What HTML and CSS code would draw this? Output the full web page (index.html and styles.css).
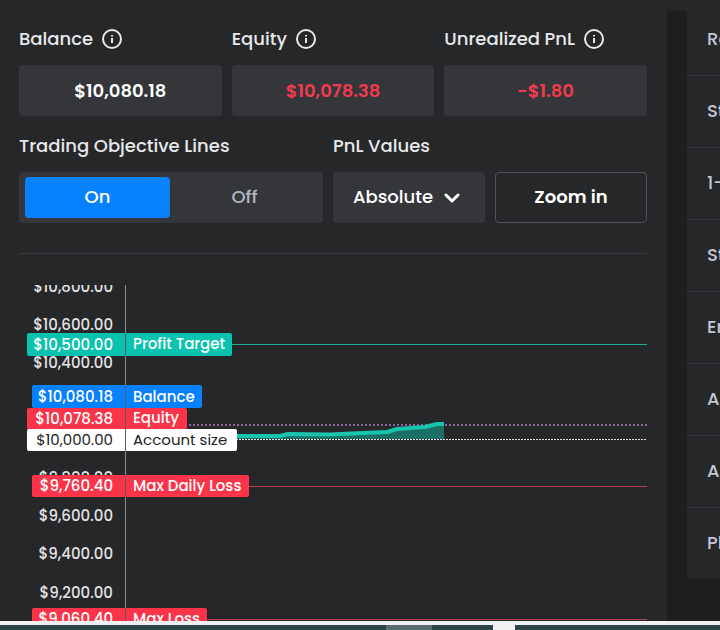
FILE: index.html
```html
<!DOCTYPE html>
<html lang="en">
<head>
<meta charset="utf-8">
<meta name="viewport" content="width=device-width, initial-scale=1">
<title>Account overview</title>
<link rel="stylesheet" href="styles.css">
</head>
<body>
<div class="top-edge"></div>
<main class="layout">
  <section class="panel">
    <div class="stats">
      <div class="stat">
        <h2 class="label">Balance
          <svg class="info" viewBox="0 0 20 20" aria-hidden="true"><circle cx="10" cy="10" r="9"/><path d="M10 9v5M10 6v1.6"/></svg>
        </h2>
        <div class="value">$10,080.18</div>
      </div>
      <div class="stat">
        <h2 class="label">Equity
          <svg class="info" viewBox="0 0 20 20" aria-hidden="true"><circle cx="10" cy="10" r="9"/><path d="M10 9v5M10 6v1.6"/></svg>
        </h2>
        <div class="value loss">$10,078.38</div>
      </div>
      <div class="stat">
        <h2 class="label">Unrealized PnL
          <svg class="info" viewBox="0 0 20 20" aria-hidden="true"><circle cx="10" cy="10" r="9"/><path d="M10 9v5M10 6v1.6"/></svg>
        </h2>
        <div class="value loss">-$1.80</div>
      </div>
    </div>

    <div class="controls">
      <fieldset class="control">
        <legend class="label">Trading Objective Lines</legend>
        <div class="toggle">
          <label class="option"><input type="radio" name="lines" checked><span>On</span></label>
          <label class="option"><input type="radio" name="lines"><span>Off</span></label>
        </div>
      </fieldset>
      <div class="control">
        <label class="label" for="pnl">PnL Values</label>
        <div class="select">
          <select id="pnl"><option>Absolute</option></select>
          <svg class="chevron" viewBox="0 0 16 10" aria-hidden="true"><path d="M2 2l6 6 6-6"/></svg>
        </div>
      </div>
      <button class="zoom" type="button">Zoom in</button>
    </div>

    <svg class="chart" role="img" aria-label="Account value chart">
      <g class="ticks">
        <text x="94" y="7">$10,800.00</text>
        <text x="94" y="45">$10,600.00</text>
        <text x="94" y="83">$10,400.00</text>
        <text x="94" y="198">$9,800.00</text>
        <text x="94" y="236">$9,600.00</text>
        <text x="94" y="274">$9,400.00</text>
        <text x="94" y="313">$9,200.00</text>
      </g>
      <g class="levels">
        <line class="green" x1="106" x2="100%" y1="59.5" y2="59.5"/>
        <line class="purple" x1="106" x2="100%" y1="140" y2="140"/>
        <line class="red" x1="106" x2="100%" y1="201.5" y2="201.5"/>
        <line class="red" x1="106" x2="100%" y1="334.5" y2="334.5"/>
      </g>
      <path class="area" d="M218 151L261 151L269 149L311 149.500L344 148L368 147L378 144L406 142L418 139L425 139V154H218Z"/>
      <path class="series" d="M210 151L261 151L269 149L311 149.500L344 148L368 147L378 144L406 142L418 139L425 139"/>
      <line class="white" x1="106" x2="100%" y1="154.500" y2="154.500"/>
      <g class="tags">
        <rect class="fill-green" x="8" y="48" width="205" height="23" rx="2"/>
        <rect class="fill-blue" x="13" y="100" width="170" height="23" rx="2"/>
        <rect class="fill-red" x="8" y="123" width="160" height="22" rx="2"/>
        <rect class="fill-white" x="8" y="144" width="210" height="22" rx="2"/>
        <rect class="fill-red" x="13" y="190" width="217" height="22" rx="2"/>
        <rect class="fill-red" x="13" y="323" width="175" height="22" rx="2"/>
      </g>
      <line class="axis" x1="106.500" x2="106.500" y1="0" y2="100%"/>
      <path class="axis-shade" d="M106.500 48V71M106.500 100V166M106.500 190V212M106.500 323V345"/>
      <g class="tag-values">
        <text x="94" y="65">$10,500.00</text>
        <text x="94" y="117">$10,080.18</text>
        <text x="94" y="139">$10,078.38</text>
        <text class="dark" x="94" y="160">$10,000.00</text>
        <text x="94" y="206">$9,760.40</text>
        <text x="94" y="339">$9,060.40</text>
      </g>
      <g class="tag-names">
        <text x="114" y="64">Profit Target</text>
        <text x="114" y="117">Balance</text>
        <text x="114" y="138">Equity</text>
        <text class="dark" x="114" y="160">Account size</text>
        <text x="114" y="206">Max Daily Loss</text>
        <text x="114" y="339">Max Loss</text>
      </g>
    </svg>
  </section>

  <aside class="details">
    <ul class="list">
      <li>Re</li>
      <li>St</li>
      <li>1-</li>
      <li>St</li>
      <li>En</li>
      <li>A</li>
      <li>A</li>
      <li>Pl</li>
    </ul>
  </aside>
</main>
<footer class="dock"><span class="task"></span><span class="window"></span></footer>
</body>
</html>
```
FILE: styles.css
```css
* {
  box-sizing: border-box;
}

body {
  margin: 0;
  min-height: 100vh;
  overflow: hidden;
  display: flex;
  flex-direction: column;
  background: #1e1e1e;
  color: #e8e8ea;
  font: 500 18px/24px Poppins, Inter, "Liberation Sans", sans-serif;
}

.top-edge {
  height: 11px;
  background: #262729;
}

.layout {
  flex: 1;
  display: grid;
  grid-template-columns: minmax(0, 1fr) 33px;
  gap: 20px;
}

.panel {
  padding: 16px 20px 0 19px;
  background: #262729;
}

.stats {
  display: grid;
  grid-template-columns: repeat(3, minmax(0, 1fr));
  gap: 10px;
}

.label {
  display: flex;
  align-items: center;
  gap: 9px;
  margin: 0 0 14px;
  padding: 0;
  height: 24px;
  font-size: 18px;
  font-weight: 500;
  white-space: nowrap;
}

.info {
  width: 20px;
  height: 20px;
  fill: none;
  stroke: #e8e8ea;
  stroke-width: 2;
}

.value {
  height: 51px;
  display: flex;
  align-items: center;
  justify-content: center;
  border-radius: 4px;
  background: #35363a;
  color: #fff;
  font-weight: 600;
}

.loss {
  color: #f23a4f;
}

.controls {
  display: grid;
  grid-template-columns: minmax(0, 2fr) minmax(0, 1fr) minmax(0, 1fr);
  align-items: end;
  gap: 10px;
  margin-top: 18px;
  padding-bottom: 30px;
  border-bottom: 1px solid #38393c;
}

.control {
  min-width: 0;
  margin: 0;
  padding: 0;
  border: 0;
}

.toggle {
  display: grid;
  grid-template-columns: 1fr 1fr;
  gap: 2px;
  height: 51px;
  padding: 5px 6px;
  border-radius: 4px;
  background: #35363a;
}

.option {
  display: grid;
  color: #b4b6bf;
}

.option input,
.option span {
  grid-area: 1 / 1;
}

.option input {
  margin: 0;
  appearance: none;
}

.option span {
  display: flex;
  align-items: center;
  justify-content: center;
  border-radius: 4px;
}

.option input:checked + span {
  background: #0781fe;
  color: #fff;
}

.select {
  display: grid;
  align-items: center;
}

.select select,
.chevron {
  grid-area: 1 / 1;
}

.select select {
  width: 100%;
  height: 51px;
  padding: 0 20px;
  border: 0;
  border-radius: 4px;
  appearance: none;
  background: #35363a;
  color: #fff;
  font: inherit;
}

.chevron {
  justify-self: end;
  width: 16px;
  height: 10px;
  margin-right: 25px;
  fill: none;
  stroke: #fff;
  stroke-width: 3;
  stroke-linecap: round;
  stroke-linejoin: round;
  pointer-events: none;
}

.zoom {
  height: 51px;
  border: 1px solid #505155;
  border-radius: 4px;
  background: transparent;
  color: #fff;
  font: inherit;
  font-weight: 600;
}

.toggle span,
.select select,
.zoom {
  padding-bottom: 2px;
}

.chart {
  display: block;
  width: 100%;
  height: 336px;
  margin-top: 31px;
  overflow: hidden;
  font-size: 15px;
  font-weight: 500;
}

.ticks text,
.tag-values text {
  text-anchor: end;
}

.ticks text {
  fill: #e2e2e4;
}

.tag-values,
.tag-names {
  fill: #fff;
}

.chart .dark {
  fill: #222;
  font-weight: 400;
}

.green { stroke: #22ab94; }
.purple { stroke: #8a6596; stroke-width: 2; stroke-dasharray: 2 2; }
.red { stroke: #b93a49; }
.white { stroke: #e4e4e4; stroke-dasharray: 2 1; }
.axis { stroke: #8b8c8f; }

.axis-shade {
  fill: none;
  stroke: #26272980;
}

.fill-green { fill: #09c3ae; }
.fill-blue { fill: #0781fe; }
.fill-red { fill: #fb3449; }
.fill-white { fill: #fff; }

.area {
  fill: #1a6e63;
}

.series {
  fill: none;
  stroke: #18c4ae;
  stroke-width: 4;
  stroke-linejoin: round;
}

.details {
  min-width: 0;
}

.list {
  margin: 0;
  padding: 0;
  overflow: hidden;
  list-style: none;
  border-radius: 0 0 0 4px;
  background: #262729;
  color: #c3c5d2;
}

.list li {
  padding: 23px 0 25px 20px;
  line-height: 23px;
  white-space: nowrap;
  border-bottom: 1px solid #343538;
}

.list li:first-child {
  padding-top: 16px;
}

.list li:last-child {
  border-bottom: 0;
}

.dock {
  display: grid;
  grid-template-columns: 386fr 46fr 61fr 22fr 205fr;
  height: 9px;
  border-top: 4px solid #f0f0f2;
  background: #2c4348;
}

.task {
  grid-column: 2;
  background: #566c70;
}

.window {
  grid-column: 4;
  background: #f0f0f2;
}
```
